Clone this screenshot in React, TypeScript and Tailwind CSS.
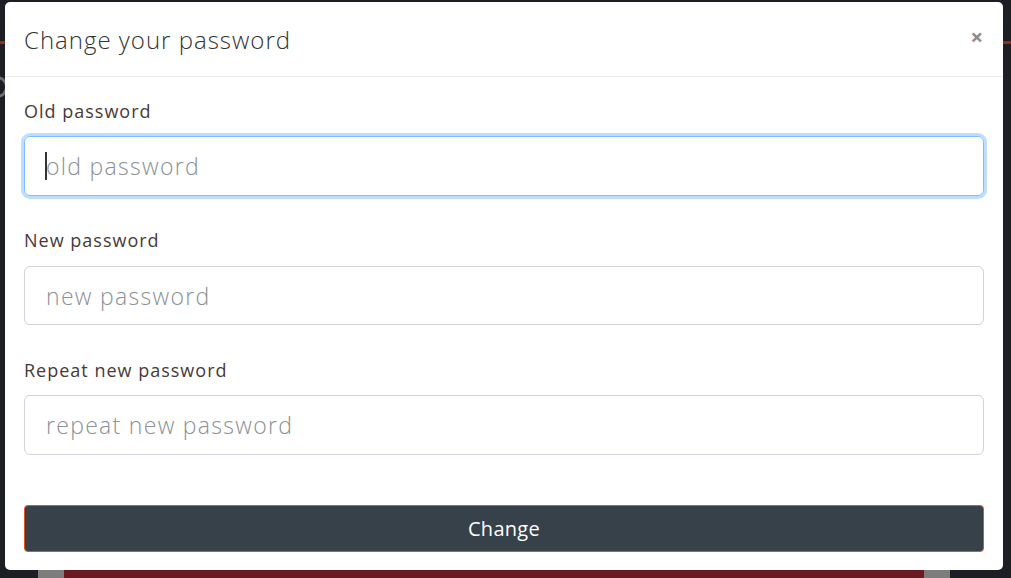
import React from "react";

export default function App() {
  const font = { fontFamily: "'Open Sans', Lato, sans-serif" };
  return (
    <div className="relative w-[1011px] h-[578px] overflow-hidden bg-[#1b1f23]" style={font}>
      {/* background page decorations */}
      <div className="absolute left-0 top-[41px] w-[1011px] h-[3px] bg-[#8a2f1c]" />
      <div className="absolute left-[-14px] top-[76px] w-[22px] h-[22px] rounded-full border-[3px] border-[#6b6f73]" />
      <div className="absolute left-0 top-[570px] w-[1011px] h-[8px] flex">
        <div className="w-[38px] bg-[#1b1f23]" />
        <div className="w-[26px] bg-[#7d7d7d]" />
        <div className="w-[860px] bg-[#6c1a22]" />
        <div className="w-[26px] bg-[#7d7d7d]" />
      </div>

      {/* modal */}
      <div className="relative ml-[5px] mt-[2px] w-[998px] h-[568px] bg-white rounded-[5px] flex flex-col">
        <div className="h-[75px] border-b border-[#e9ecef] flex items-center justify-between pl-[19px] pr-[20px]">
          <h2 className="text-[24px] text-[#333333] font-light leading-none tracking-[1px] pt-[1px]">Change your password</h2>
          <span className="text-[#8a8a8a] text-[22px] font-bold leading-none mb-[6px]">×</span>
        </div>
        <div className="flex flex-col px-[19px] pt-[21px]">
          <label className="text-[18px] text-[#47393a] leading-[26px] tracking-[1px]">Old password</label>
          <div className="relative mt-[12px]">
            <input
              className="h-[60px] w-full rounded-[6px] border border-[#80bdff] shadow-[0_0_0_3px_rgba(0,123,255,0.25)] px-[21px] text-[23px] font-light tracking-[1.3px] outline-none placeholder:text-[#8a9096]"
              placeholder="old password"
              style={font}
            />
            <span className="absolute left-[21px] top-[16px] w-[2px] h-[28px] bg-[#333]" />
          </div>
          <label className="mt-[31px] text-[18px] text-[#47393a] leading-[26px] tracking-[1px]">New password</label>
          <input
            className="mt-[13px] h-[59px] w-full rounded-[6px] border border-[#ced4da] px-[21px] text-[23px] font-light tracking-[1.3px] outline-none placeholder:text-[#8a9096]"
            placeholder="new password"
            style={font}
          />
          <label className="mt-[32px] text-[18px] text-[#47393a] leading-[26px] tracking-[1px]">Repeat new password</label>
          <input
            className="mt-[12px] h-[60px] w-full rounded-[6px] border border-[#ced4da] px-[21px] text-[23px] font-light tracking-[1.3px] outline-none placeholder:text-[#8a9096]"
            placeholder="repeat new password"
            style={font}
          />
          <button
            className="mt-[50px] h-[47px] w-full rounded-[4px] border border-[#e0502a] bg-[#36414a] text-white text-[20px] tracking-[0.3px]"
            style={font}
          >
            Change
          </button>
        </div>
      </div>
    </div>
  );
}
